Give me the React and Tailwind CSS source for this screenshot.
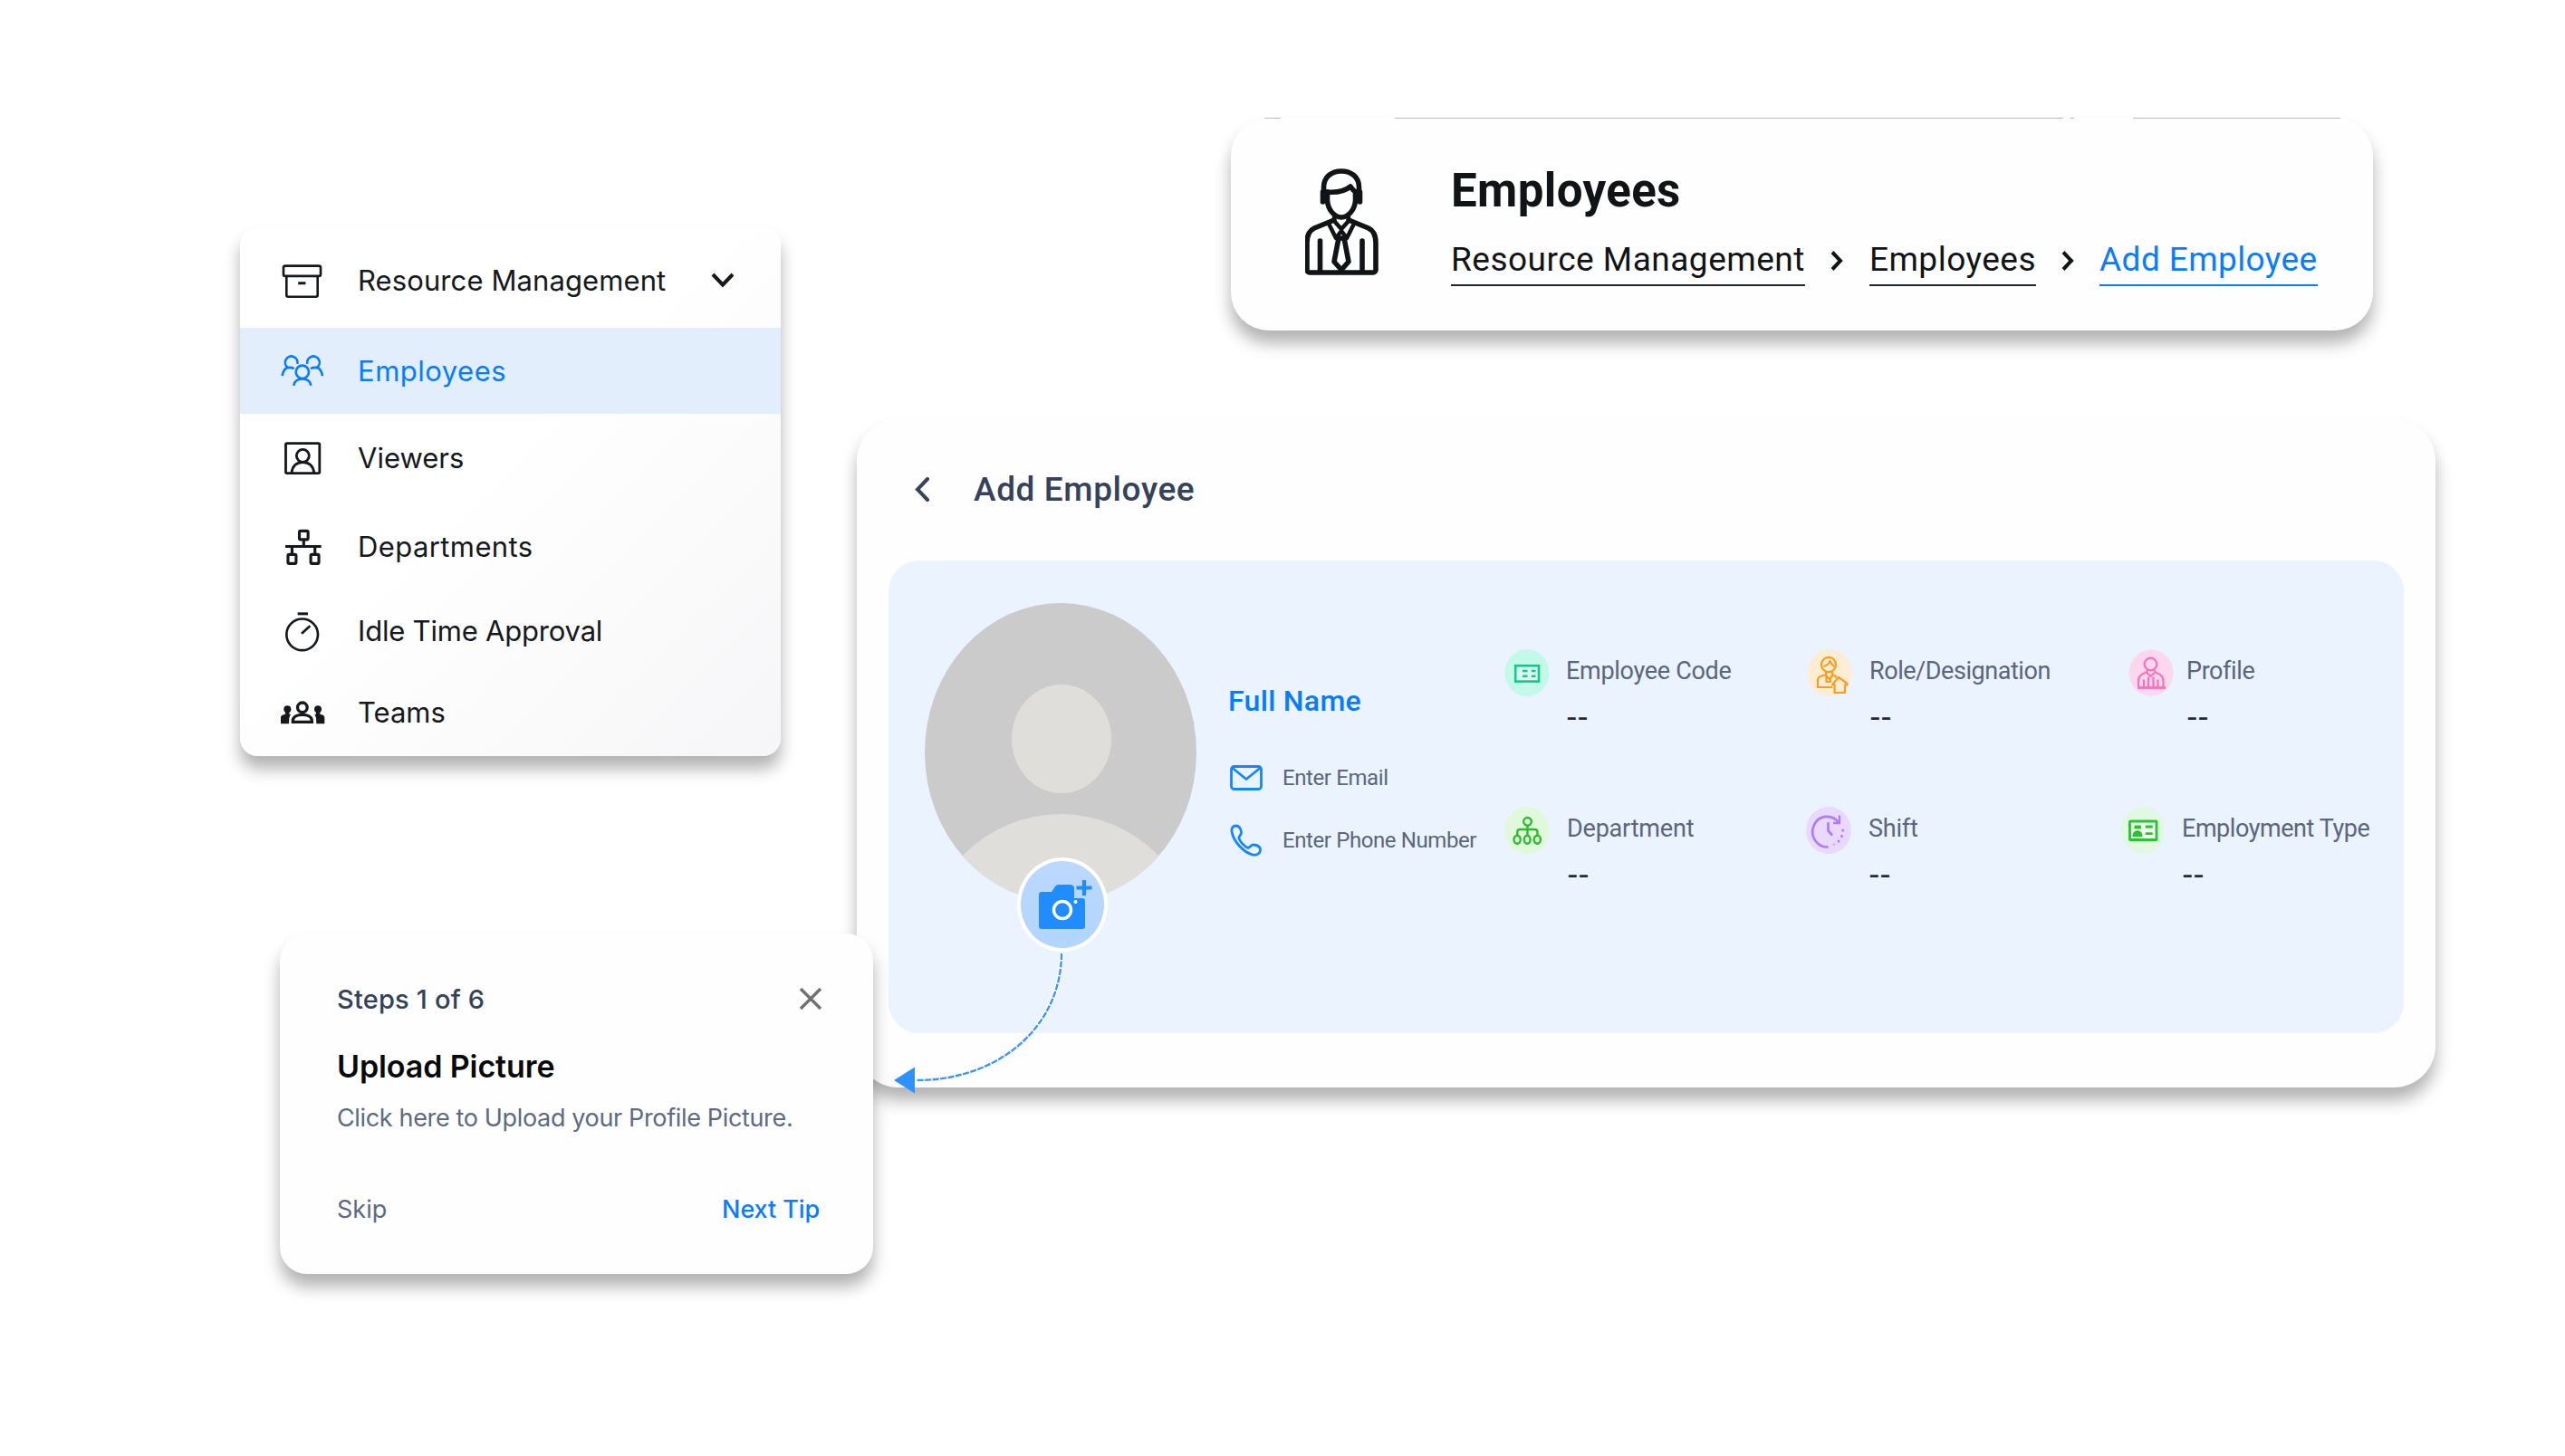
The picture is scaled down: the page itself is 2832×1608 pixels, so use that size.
const ArchiveIcon = () => (
  <svg viewBox="60 62 136 116" className="w-[45px] h-[39px]" fill="none" stroke="currentColor" strokeWidth="8">
    <rect x="66" y="69" width="124" height="34" rx="6" />
    <path d="M76 103v63a6 6 0 0 0 6 6h92a6 6 0 0 0 6-6v-63" />
    <path d="M115 127h25" strokeWidth="9" />
  </svg>
);

const EmployeesIcon = () => (
  <svg viewBox="60 370 150 110" className="w-[50px] h-[37px]" fill="none" stroke="currentColor" strokeWidth="8">
    <circle cx="134.5" cy="429" r="21.500" />
    <path d="M106 474c2-16 12-22 28.500-22s26.500 6 28.500 22" />
    <path d="M118 402a20.500 20.500 0 1 0-32 12c-10 4-16 12-18 28M86 415c8-2 14-1 21 3" />
    <path d="M151 402a20.500 20.500 0 1 1 32 12c10 4 16 12 18 28M183 415c-8-2-14-1-21 3" />
  </svg>
);

const ViewersIcon = () => (
  <svg viewBox="70 652 126 114" className="w-[42px] h-[38px]" fill="none" stroke="currentColor" strokeWidth="8.500">
    <rect x="77.500" y="660" width="112" height="99" rx="4" />
    <circle cx="134" cy="701" r="21" />
    <path d="M97 757c3-25 17-34 37-34s34 9 37 34" />
  </svg>
);

const DepartmentsIcon = () => (
  <svg viewBox="68 60 128 130" className="w-[43px] h-[43px]" fill="none" stroke="currentColor" strokeWidth="9.500">
    <rect x="120" y="70" width="29" height="29" rx="4" />
    <path d="M134.500 100v22M73 122h120M95.500 122v26M172 122v26" />
    <rect x="82" y="149" width="27" height="30" rx="4" />
    <rect x="158" y="149" width="27" height="30" rx="4" />
  </svg>
);

const StopwatchIcon = () => (
  <svg viewBox="74 340 120 134" className="w-[40px] h-[45px]" fill="none" stroke="currentColor" strokeWidth="8">
    <circle cx="133" cy="417" r="52" />
    <path d="M118 348h34" strokeWidth="9" />
    <path d="M131 414l28-26" />
  </svg>
);

const TeamsIcon = () => (
  <svg viewBox="60 634 150 84" className="w-[50px] h-[28px]" fill="none" stroke="currentColor" strokeWidth="10">
    <circle cx="134.500" cy="659" r="16" />
    <path d="M103 707v-4c0-14 16-20 31.500-20s31.500 6 31.500 20v4z" />
    <g fill="currentColor" stroke="none">
      <circle cx="85" cy="665" r="12" />
      <path d="M63 713v-20c0-8 7-11 15-12v-8h13v8h5l-5 12-1 20z" />
      <circle cx="186" cy="665" r="12" />
      <path d="M208 713v-20c0-8-7-11-15-12v-8h-13v8h-5l5 12 1 20z" />
    </g>
  </svg>
);

const PersonIcon = () => (
  <svg viewBox="102 74 82 120" className="w-[82px] h-[120px]" fill="none" stroke="currentColor" strokeWidth="5.600" strokeLinecap="round" strokeLinejoin="round">
    <path d="M122.500 108V96c0-12 9-18 19.500-18s19.500 6 19.500 18v12" />
    <path d="M126 101c11 1 20-1 26-6 2 3 4 5 6 6" />
    <path d="M126.500 101v10c1 10 8 18 15.500 18s14.500-8 15.500-18v-10" />
    <path d="M121.500 101v11M162.500 101v11" />
    <path d="M134 132l-22 9c-6 3-8 8-8 16v30a3 3 0 0 0 3 3h70a3 3 0 0 0 3-3v-30c0-8-2-13-8-16l-22-9" />
    <path d="M134 129v4l8 9 8-9v-4M128 136l8 16 6-8 6 8 8-16" strokeWidth="4.500" />
    <path d="M118.500 155v33M165 155v33" />
    <path d="M139 152l-5 26 8 9 8-9-5-26z" />
  </svg>
);

const Chevron = () => (
  <svg viewBox="0 0 14 22" className="mb-[8px] w-[14px] h-[22px] shrink-0" fill="none" stroke="#111417" strokeWidth="4">
    <path d="M2 1.500L11 11l-9 9.500" />
  </svg>
);

const CodeIcon = () => (
  <svg viewBox="-25 -26 50 52" className="w-[50px] h-[52px] shrink-0" fill="none" stroke="#12c88a" strokeWidth="2.600">
    <ellipse rx="24.500" ry="26" fill="#c3f9e9" stroke="none" />
    <rect x="-12.800" y="-7.800" width="25.800" height="17.400" fill="#d7fbf0" />
    <path d="M-5-2h5.500M5-2h4.500M-5 3.700h5.500M5 3.700h4.500" />
  </svg>
);

const RoleIcon = () => (
  <svg viewBox="-25 -26 50 52" className="w-[50px] h-[52px] shrink-0" fill="none" stroke="#fb9d1d" strokeWidth="2.200" strokeLinejoin="round">
    <ellipse rx="24.500" ry="26" fill="#feecd3" stroke="none" />
    <ellipse cx="-1" cy="-9" rx="8" ry="8.200" />
    <path d="M-6.500-7c3-1 6-3 7-6 1 3 3 5 5 6M-4-1.500V3l4 4 3-4v-4" />
    <path d="M3 16h-16V8c0-4 4-5 9-5.500M4 2.500c2 .5 3 1 4 3M-3.500 4v6h4.500v-4" />
    <path d="M10 5L3 13h2.500v9H17v-8.500h2.500V12z" fill="#feecd3" />
  </svg>
);

const ProfileIcon = () => (
  <svg viewBox="-25 -26 50 52" className="w-[50px] h-[52px] shrink-0" fill="none" stroke="#f771b9" strokeWidth="2.200" strokeLinejoin="round">
    <ellipse rx="24.500" ry="25.500" fill="#fcd7ee" stroke="none" />
    <circle cx="-.500" cy="-9.500" r="6.800" />
    <path d="M-14 16.500V9c0-6 4-8 9-9.500l1-3M13.500 16.500V9c0-6-4-8-9-9.500l-1-3" />
    <path d="M-15 16.500h31" strokeWidth="2.800" />
    <path d="M-4.500 0l4 4 4-4M-8 7.500v9M7.500 7.500v9M-3 4.500v12M2.500 4.500v12" />
  </svg>
);

const DepartmentIcon = () => (
  <svg viewBox="-25 -26 50 52" className="w-[50px] h-[52px] shrink-0" fill="none" stroke="#2fb92f" strokeWidth="2.400">
    <ellipse rx="24.500" ry="26" fill="#e0f9db" stroke="none" />
    <circle cx=".500" cy="-9.700" r="4.300" />
    <path d="M.5-5v10M-10.700 5V2q0-3 3-3H8.500q3 0 3 3v3" />
    <ellipse cx="-10.900" cy="10.300" rx="3.600" ry="4.500" />
    <ellipse cx=".200" cy="10.300" rx="3.400" ry="4.500" />
    <ellipse cx="11.300" cy="10.300" rx="3.600" ry="4.500" />
  </svg>
);

const ShiftIcon = () => (
  <svg viewBox="-25 -26 50 52" className="w-[50px] h-[52px] shrink-0" fill="none" stroke="#b07bfb" strokeWidth="2.700">
    <ellipse rx="25" ry="26" fill="#e8d9fd" stroke="none" />
    <path d="M11-8.500A16 16.800 0 1 0-.5 18.400" />
    <path d="M12-16.500v8.500H5" strokeWidth="2.300" />
    <path d="M-.5-9v9.500l4.500 5" />
    <g fill="#b07bfb" stroke="none">
      <circle cx="15.700" cy="0" r="1.500" />
      <circle cx="14.500" cy="6.500" r="1.500" />
      <circle cx="11" cy="12" r="1.500" />
      <circle cx="6" cy="15.500" r="1.200" fill="#cbaafb" />
    </g>
  </svg>
);

const EmploymentIcon = () => (
  <svg viewBox="-25 -26 50 52" className="w-[50px] h-[52px] shrink-0" fill="none" stroke="#27c432" strokeWidth="2.800">
    <ellipse rx="24" ry="26" fill="#e0f9e0" stroke="none" />
    <rect x="-14.500" y="-10" width="29.500" height="20.500" rx=".500" fill="#f0fcf0" />
    <path d="M2.700-4h8M2.700 3.700h8" />
    <g fill="#27c432" stroke="none">
      <path d="M-9.500-5.500h7.500v4h-7.500z" />
      <path d="M-11.500 7.200c0-5 2-7 5.500-7s5.500 2 5.500 7z" />
    </g>
  </svg>
);

const menuItems = [
  { label: "Employees", Icon: EmployeesIcon, row: "h-[95px] bg-[#e2eefc] text-[#087cff]", text: "pt-px tracking-[0.5px]" },
  { label: "Viewers", Icon: ViewersIcon, row: "h-[98px]", text: "pt-px" },
  { label: "Departments", Icon: DepartmentsIcon, row: "h-[98px]", text: "tracking-[0.4px]" },
  { label: "Idle Time Approval", Icon: StopwatchIcon, row: "h-[88px]", text: "pt-px tracking-[-0.2px]" },
  { label: "Teams", Icon: TeamsIcon, row: "h-[92px]", text: "pt-px" },
];

const details = [
  [
    { label: "Employee Code", Icon: CodeIcon, box: "w-[334px] gap-[18px] tracking-[-0.3px]" },
    { label: "Role/Designation", Icon: RoleIcon, box: "w-[355px] gap-[19px] tracking-[-0.45px]" },
    { label: "Profile", Icon: ProfileIcon, box: "gap-[14px] tracking-[-0.4px]" },
  ],
  [
    { label: "Department", Icon: DepartmentIcon, box: "w-[333px] gap-[19px] tracking-[-0.2px]" },
    { label: "Shift", Icon: ShiftIcon, box: "w-[347px] gap-[19px] tracking-[-0.2px]" },
    { label: "Employment Type", Icon: EmploymentIcon, box: "gap-[18px] tracking-[-0.45px]" },
  ],
];

const Sidebar = () => (
  <nav className="ml-[265px] h-[584px] w-[597px] overflow-hidden rounded-[20px] bg-linear-to-br from-white from-45% to-[#f6f6f8] font-[Inter,sans-serif] text-[31px] text-[#15181c] shadow-[0_14px_18px_rgba(0,0,0,0.3)]">
    <div className="flex h-[111px] items-center gap-[32px] pt-[8px] pl-[38px]">
      <span className="flex w-[60px] justify-center"><ArchiveIcon /></span>
      <span className="w-[358px] tracking-[0.1px] whitespace-nowrap">Resource Management</span>
      <svg viewBox="0 0 26 17" className="mb-[2px] w-[26px] h-[17px]" fill="none" stroke="currentColor" strokeWidth="4">
        <path d="M2 2l11 11.500L24 2" />
      </svg>
    </div>
    {menuItems.map(({ label, Icon, row, text }) => (
      <div key={label} className={`flex items-center gap-[31px] pl-[39px] ${row}`}>
        <span className="flex w-[60px] justify-center"><Icon /></span>
        <span className={text}>{label}</span>
      </div>
    ))}
  </nav>
);

const TipCard = () => (
  <div className="relative z-10 mt-[196px] ml-[309px] flex h-[376px] w-[655px] flex-col rounded-[30px] bg-[#fefefe] pt-[53px] pr-[56px] pl-[63px] font-[Inter,sans-serif] leading-[40px] shadow-[0_14px_18px_rgba(0,0,0,0.3)]">
    <div className="flex items-center justify-between">
      <span className="text-[29px] font-medium tracking-[0.2px] text-[#33425a]">Steps 1 of 6</span>
      <svg viewBox="0 0 26 26" className="mb-[2px] w-[26px] h-[26px]" fill="none" stroke="#6f7072" strokeWidth="3.300">
        <path d="M2 2l22 22M24 2L2 24" />
      </svg>
    </div>
    <h2 className="mt-[34px] text-[34px] font-semibold tracking-[-0.1px] text-[#08090b]">Upload Picture</h2>
    <p className="mt-[17px] text-[27px] tracking-[-0.35px] whitespace-nowrap text-[#5d6a81]">
      Click here to Upload your Profile Picture.
    </p>
    <div className="mt-[61px] flex justify-between text-[27px]">
      <button className="text-[#5d6a81]">Skip</button>
      <button className="mr-[3px] font-medium tracking-[-0.1px] text-[#0a7cff]">Next Tip</button>
    </div>
  </div>
);

const HeaderCard = () => (
  <header className="ml-[415px] h-[235px] w-[1261px] rounded-[42px] bg-[#fefefe] shadow-[0_14px_18px_rgba(0,0,0,0.3)]">
    {/* broken hairline along the top edge */}
    <div className="flex h-px">
      <i className="ml-[37px] w-[18px] bg-[#bdbdbd]" />
      <i className="ml-[126px] w-[738px] bg-[#bdbdbd]" />
      <i className="ml-[8px] w-[4px] bg-[#bdbdbd]" />
      <i className="ml-[65px] w-[229px] bg-[#bdbdbd]" />
    </div>
    <div className="flex text-[#111417]">
      <div className="pt-[54px] pl-[82px]"><PersonIcon /></div>
      <div className="pt-[50px] pl-[79px]">
        <h1 className="text-[51px] leading-[60px] font-bold tracking-[0.4px]">Employees</h1>
        <div className="mt-[26px] flex items-center text-[37px] leading-[40px] tracking-[0.5px] whitespace-nowrap">
          <a className="border-b-[2.5px] border-[#22262a] pb-[7px]">Resource Management</a>
          <span className="flex w-[71px] justify-center"><Chevron /></span>
          <a className="border-b-[2.5px] border-[#22262a] pb-[7px]">Employees</a>
          <span className="flex w-[70px] justify-center"><Chevron /></span>
          <a className="border-b-[2.5px] border-[#0a7cff] pb-[7px] tracking-[0.4px] text-[#0a7cff]">Add Employee</a>
        </div>
      </div>
    </div>
  </header>
);

const Avatar = () => (
  <div className="relative mt-[47px] ml-[40px] h-[330px] w-[300px] shrink-0">
    <svg viewBox="0 0 300 330" className="w-[300px] h-[330px]">
      <defs>
        <clipPath id="avatar"><ellipse cx="150" cy="165" rx="150" ry="165" /></clipPath>
      </defs>
      <g clipPath="url(#avatar)">
        <rect width="300" height="330" fill="#cbcbcb" />
        <ellipse cx="151" cy="150" rx="55" ry="60" fill="#dfdedb" />
        <ellipse cx="150" cy="383" rx="150" ry="150" fill="#dfdedb" />
      </g>
    </svg>
    <div className="absolute top-[281px] left-[102px] flex h-[104px] w-[100px] items-center justify-center rounded-[50%] border-[4px] border-white bg-linear-to-b from-[#bcd9fd] to-[#b2d4fd]">
      <svg viewBox="-1 -1 60 60" className="w-[60px] h-[60px] overflow-visible" fill="#208cfd">
        <path d="M3 18q0-3 3-3h11l4-6q1-2 4-2h12q4 0 5 3v12h9q3 0 3 3v28q0 3-3 3H6q-3 0-3-3z" />
        <path d="M53 2v17M44.500 10.500h17" stroke="#208cfd" strokeWidth="4.200" />
        <circle cx="29" cy="35" r="9.500" stroke="#fff" strokeWidth="3.400" />
        <circle cx="43.500" cy="26" r="2" fill="#fff" />
      </svg>
    </div>
  </div>
);

const ProfileCard = () => (
  <section className="relative mt-[98px] ml-[2px] h-[738px] w-[1743px] rounded-[46px] bg-[#fefefe] shadow-[0_14px_18px_rgba(0,0,0,0.3)]">
    <div className="flex h-[156px] items-center gap-[48px] pl-[64px] text-[#35425a]">
      <svg viewBox="0 0 17 27" className="mb-[2px] w-[17px] h-[27px]" fill="none" stroke="currentColor" strokeWidth="4" strokeLinecap="round">
        <path d="M14 2L3 13.500 14 25" />
      </svg>
      <h2 className="text-[37px] font-medium tracking-[0.6px]">Add Employee</h2>
    </div>
    <div className="ml-[35px] flex h-[522px] w-[1673px] rounded-[34px] bg-[#eaf3fe]">
      <Avatar />
      <div className="ml-[35px] w-[305px] shrink-0 pt-[135px] leading-[40px]">
        <h3 className="text-[32px] font-medium tracking-[0.3px] text-[#087bff]">Full Name</h3>
        <div className="mt-[45px] flex items-center gap-[22px] text-[24px] tracking-[-0.4px] text-[#5a667c]">
          <svg viewBox="0 0 36 28" className="ml-[2px] w-[36px] h-[28px]" fill="none" stroke="#1686ff" strokeWidth="2.800" strokeLinejoin="round">
            <rect x="1.500" y="1.500" width="33" height="25" rx="3" />
            <path d="M2.500 3L18 15.500 33.500 3" />
          </svg>
          Enter Email
        </div>
        <div className="mt-[29px] flex items-center gap-[22px] text-[24px] tracking-[-0.4px] whitespace-nowrap text-[#5a667c]">
          <svg viewBox="0 0 36 36" className="ml-[2px] w-[36px] h-[36px]" fill="none" stroke="#1686ff" strokeWidth="2.800" strokeLinejoin="round">
            <path d="M6.500 2c4 0 6 4 6 7.500 0 3-3.500 4-2.500 6.500 2 4.500 6 8.500 10 10.500 2-.5 3.500-4 6.500-3.500 4 .5 7 2.500 7 5.500 0 4-4 6.500-8.500 5.500C14.500 31 3.500 19 2 8c-.5-3.500 1.500-6 4.500-6z" />
          </svg>
          Enter Phone Number
        </div>
      </div>
      <div className="flex flex-col gap-[77px] pt-[98px]">
        {details.map((row, i) => (
          <div key={i} className="flex h-[97px]">
            {row.map(({ label, Icon, box }) => (
              <div key={label} className={`flex shrink-0 ${box}`}>
                <Icon />
                <div className="pt-px">
                  <p className="text-[27px] leading-[46px] whitespace-nowrap text-[#5a667c]">{label}</p>
                  <p className="mt-[6px] font-[Inter,sans-serif] text-[27px] leading-[46px] font-semibold tracking-[-0.2px] text-[#232b38]">--</p>
                </div>
              </div>
            ))}
          </div>
        ))}
      </div>
    </div>
    {/* arrow from the camera badge to the tip */}
    <svg viewBox="0 0 200 160" className="absolute top-[587px] left-[34px] w-[200px] h-[160px]" fill="none">
      <path d="M192 3C192 81 126 143 32 143" stroke="#fff" strokeWidth="5" />
      <path d="M192 3C192 81 126 143 32 143" stroke="#3d95fb" strokeWidth="2.400" strokeDasharray="7 1.500" />
      <path d="M7 143l23-14.500v29z" fill="#2f91fd" />
    </svg>
  </section>
);

export default function App() {
  return (
    <div className="flex h-[1608px] w-[2832px] overflow-hidden bg-white font-[Roboto,sans-serif]">
      <div className="w-[944px] shrink-0 pt-[251px]">
        <Sidebar />
        <TipCard />
      </div>
      <div className="shrink-0 pt-[130px]">
        <HeaderCard />
        <ProfileCard />
      </div>
    </div>
  );
}
